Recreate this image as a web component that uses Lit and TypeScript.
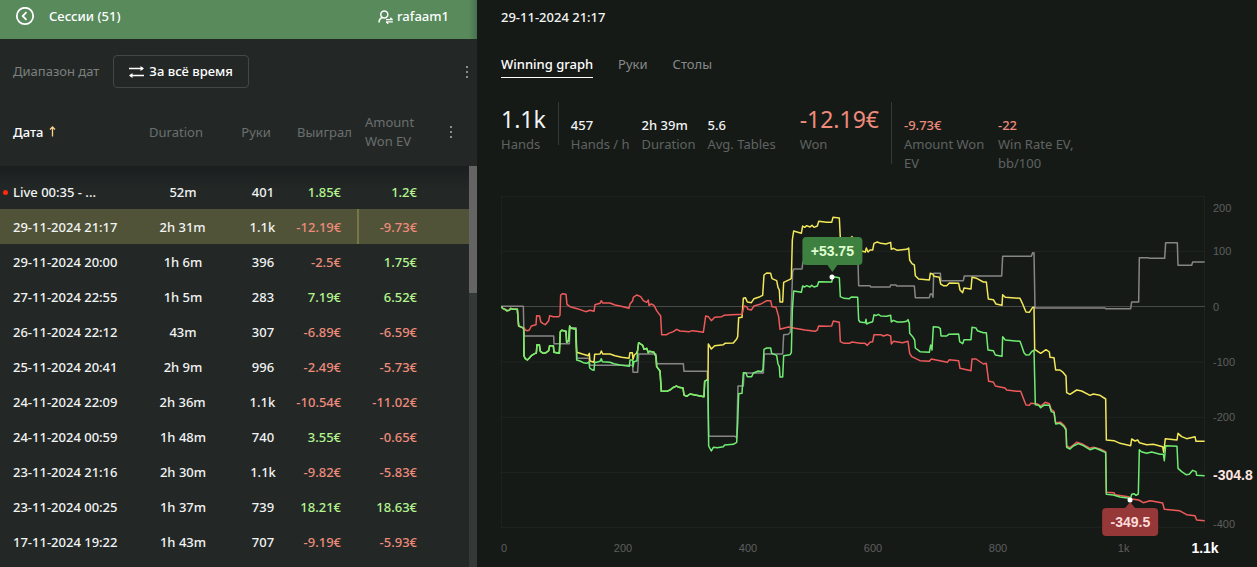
import { LitElement, html, svg, css } from "lit";
import { customElement, property, state } from "lit/decorators.js";
import { classMap } from "lit/directives/class-map.js";

interface Session {
  date: string;
  duration: string;
  hands: string;
  won: string;
  ev: string;
  live?: boolean;
}

const SESSIONS: Session[] = [
  { date: "Live 00:35 - ...", duration: "52m", hands: "401", won: "1.85€", ev: "1.2€", live: true },
  { date: "29-11-2024 21:17", duration: "2h 31m", hands: "1.1k", won: "-12.19€", ev: "-9.73€" },
  { date: "29-11-2024 20:00", duration: "1h 6m", hands: "396", won: "-2.5€", ev: "1.75€" },
  { date: "27-11-2024 22:55", duration: "1h 5m", hands: "283", won: "7.19€", ev: "6.52€" },
  { date: "26-11-2024 22:12", duration: "43m", hands: "307", won: "-6.89€", ev: "-6.59€" },
  { date: "25-11-2024 20:41", duration: "2h 9m", hands: "996", won: "-2.49€", ev: "-5.73€" },
  { date: "24-11-2024 22:09", duration: "2h 36m", hands: "1.1k", won: "-10.54€", ev: "-11.02€" },
  { date: "24-11-2024 00:59", duration: "1h 48m", hands: "740", won: "3.55€", ev: "-0.65€" },
  { date: "23-11-2024 21:16", duration: "2h 30m", hands: "1.1k", won: "-9.82€", ev: "-5.83€" },
  { date: "23-11-2024 00:25", duration: "1h 37m", hands: "739", won: "18.21€", ev: "18.63€" },
  { date: "17-11-2024 19:22", duration: "1h 43m", hands: "707", won: "-9.19€", ev: "-5.93€" },
];

/** Plot space: x 33..2145, y 18..1014. Each segment is shifted by its own origin. */
const PLOT = { x: 33, y: 18, w: 2112, h: 996 };

const line = (...segments: [number, number, string][]) =>
  segments
    .flatMap(([dx, dy, pts]) =>
      pts.split(" ").map((p) => {
        const [x, y] = p.split(",").map(Number);
        return `${x + dx},${y + dy}`;
      })
    )
    .join(" ");

const START = "34,349 38,355 45,358 50,362 58,361 62,355 68,358 82,358 86,408 96,412 101,415";
const EARLY =
  "102,498 106,506 112,510 118,504 124,497 134,491 139,489 141,464 148,464 151,484 160,490 168,488 176,482 179,467 190,467 192,487 208,490 211,425 215,421 228,424 230,457 236,452 239,408 243,415 257,417";
const MID =
  "443,480 446,458 452,462 458,466 462,478 470,475 475,488 478,484 492,487 498,500 500,530 510,543 514,604 530,604 540,600 550,592 560,588 566,592 579,594 582,615 590,619 600,612 642,620 644,574 650,570 654,572";

const GREEN = line(
  [0, 0, START],
  [0, 0, EARLY],
  [0, 0, "260,510 270,513 280,518 290,520 297,516 299,534 306,539 312,541 314,517 320,517 330,514 334,506 337,515 360,517 372,521 390,525 418,529 420,510 428,510 429,530 432,515 441,512"],
  [0, 0, MID],
  [570, 0, "86,768 94,783 100,772 112,773 130,770 134,765 160,763 170,757 173,700 176,611 186,610 190,548 198,549 202,560 215,560 220,549 235,543 245,545 249,538 252,478 260,474 272,474 275,490 290,496 294,522 298,530 300,561 308,561 311,497 330,494 334,488 337,360 341,303 364,307 368,288 374,291 380,287 390,291 395,286 402,291 412,288 416,275 455,276 459,260 478,263 481,320 492,325 508,326 514,321 533,322 536,390 540,396"],
  [1110, 0, "16,398 18,388 20,402 28,398 38,395 42,374 48,377 55,373 62,378 80,379 92,376 94,396 100,391 112,396 128,396 140,394 144,389 148,400 149,430 158,440 164,450 166,474 180,485 208,487 212,465 216,480 220,410 236,412 241,416 243,438 260,438 266,433 296,432 299,455 308,461 312,449 333,449 336,412 348,414 352,422 370,428 379,428 384,480 400,482 406,495 426,499 428,440 436,450 480,454 486,470 492,488 498,495 508,494 516,484 522,480 526,644 536,646 542,653 550,647"],
  [1650, 510, "12,135 28,136 34,155 42,158 47,192 60,190 72,200 78,210 80,262 90,267 100,258 115,251 130,257 150,269 165,264 180,270 197,278 199,403 220,405 240,411 268,415 272,414 275,403 282,401 288,406 295,402 298,269 304,275 320,280 335,276 360,283 370,283 373,302 377,257 411,259 414,325 425,335 438,344 448,343 458,331 468,335 470,346 494,347"]
);

const RED = line(
  [0, 0, START],
  [0, 0, "102,413 106,420 112,422 118,420 124,408 138,404 140,377 149,378 152,395 158,400 166,404 176,392 179,377 190,380 206,380 210,376 212,315 218,311 228,313 231,343 240,350 262,356 287,365 300,361 312,364 315,344 330,340 334,332 338,339 360,339 375,345 390,348 417,355 420,342 428,332 430,322 440,315 452,320 460,332 470,337 475,330 477,346 484,342 492,346 500,362 508,373 512,378 515,434 530,434 536,430 550,425 560,418 570,423 598,425"],
  [570, 0, "36,422 50,424 70,427 74,400 77,378 85,380 94,392 104,382 125,380 132,376 155,374 186,373 192,348 200,350 204,358 214,360 222,348 240,343 250,338 260,332 272,332 276,350 288,352 296,380 300,418 325,411 345,415 375,420 405,424 412,420 416,408 440,409 455,408 460,393 478,397 481,455 492,460 508,460 516,456 540,460"],
  [1110, 0, "15,460 22,466 30,457 38,455 42,434 62,434 70,438 82,434 92,438 94,462 100,454 128,458 144,454 149,490 155,500 180,512 208,514 214,507 262,517 268,509 296,512 300,535 333,542 336,507 348,507 370,522 379,520 386,574 400,576 406,588 435,594 440,600 470,604 482,604 490,625 498,645 508,646 512,640 530,641 542,648"],
  [1650, 510, "16,127 28,131 34,149 42,154 47,188 62,187 72,196 78,206 80,258 90,263 110,247 125,251 150,265 160,262 180,267 197,275 199,397 222,398 225,404 265,410 275,417 296,420 310,428 330,422 340,424 368,429 373,448 418,452 440,464 465,467 470,480 494,482"]
);

const YELLOW = line(
  [0, 0, START],
  [0, 0, EARLY],
  [0, 0, "260,487 270,490 280,493 295,497 298,490 300,513 312,517 314,493 330,492 334,483 338,492 360,492 375,497 395,502 417,505 420,488 427,488 429,508 433,495 440,489"],
  [0, 0, MID],
  [570, 0, "85,462 94,477 104,467 130,464 135,460 160,459 170,447 173,440 176,383 186,382 190,325 196,323 202,336 214,338 222,326 240,320 248,316 252,255 260,249 272,250 276,266 290,272 294,292 298,300 300,336 308,336 311,277 330,268 334,265 337,150 341,123 364,130 368,108 374,112 380,107 390,111 396,106 402,112 412,108 416,94 440,97 455,97 459,82 478,84 481,145 508,147 516,140 520,145 533,150 536,178"],
  [1110, 0, "8,184 16,186 19,174 24,186 30,180 38,180 42,160 52,156 62,160 78,162 92,157 94,178 100,175 112,181 140,178 146,174 149,210 156,221 163,225 166,257 176,267 208,270 211,250 218,252 222,259 238,262 242,282 250,287 260,287 268,279 296,280 300,300 308,308 312,294 333,297 336,262 350,265 370,276 379,276 385,327 400,329 408,342 426,346 428,314 436,322 480,325 488,342 498,366 508,367 518,352 522,352 524,478 542,490 558,479 568,486 570,502 582,503"],
  [1650, 510, "47,30 60,30 70,38 78,48 80,98 90,103 110,90 125,93 150,106 160,102 180,106 197,117 199,240 222,242 240,250 272,257 275,237 285,243 293,240 298,248 320,254 340,253 368,260 371,277 376,236 411,240 414,220 425,230 440,236 465,230 468,244 494,244"]
);

const GRAY = line(
  [0, 0, "34,349 100,349 102,438 191,438 192,461 238,461 240,413 258,413 261,505 297,505 300,526 428,526 429,547 443,547 446,492 498,492 500,521 580,521 582,544"],
  [570, 0, "82,544 86,739 165,739 170,743 174,588 190,588 192,549 250,549 253,492 308,492 311,434 325,433 331,427 338,245 341,237 366,237 369,215 534,215 536,287"],
  [1110, 0, "30,287 32,291 90,291 92,285 108,285 110,288 163,288 166,323 208,323 211,312 216,312 219,322 221,250 241,250 243,272 310,272 313,258 425,258 428,199 514,199 518,188 522,188 525,354"],
  [1650, 0, "195,354 197,356 272,356 275,336 296,336 298,203 325,203 327,205 374,205 377,158 412,158 414,226 455,226 458,216 494,216"]
);

const GRID_ROWS = [19, 184, 516, 682, 847, 1012];
const Y_LABELS = [
  { text: "200", y: 54 },
  { text: "100", y: 184 },
  { text: "0", y: 351 },
  { text: "-100", y: 516 },
  { text: "-200", y: 682 },
  { text: "-304.8", y: 855, strong: true },
  { text: "-400", y: 1002 },
];
const X_LABELS = [
  { text: "0", x: 42 },
  { text: "200", x: 399 },
  { text: "400", x: 774 },
  { text: "600", x: 1149 },
  { text: "800", x: 1524 },
  { text: "1k", x: 1901 },
  { text: "1.1k", x: 2145, strong: true },
];
const MARKERS = [
  { text: "+53.75", x: 1027, y: 260, up: true },
  { text: "-349.5", x: 1921, y: 930, up: false },
];

const pctX = (x: number) => `${(((x - PLOT.x) / PLOT.w) * 100).toFixed(3)}%`;
const pctY = (y: number) => `${(((y - PLOT.y) / PLOT.h) * 100).toFixed(3)}%`;

const dots = svg`<svg class="dots" width="4" height="14" viewBox="0 0 4 14" aria-hidden="true">
  <path d="M1 1h2v2H1zM1 6h2v2H1zM1 11h2v2H1z" fill="currentColor"/></svg>`;

@customElement("winning-graph")
class WinningGraph extends LitElement {
  static styles = css`
    :host {
      display: grid;
      grid-template-columns: 1fr 52px;
      grid-template-rows: 332px 39px;
      font: 11px/16px "Liberation Sans", Arial, sans-serif;
      color: #5c5f5d;
    }
    .plot, .y-axis, .x-axis { position: relative; }
    .canvas { display: block; width: 100%; height: 100%; }
    .grid { stroke: #212522; }
    .zero { stroke: #474a48; }
    .series { fill: none; stroke-width: 1.5; stroke-linejoin: round; }
    .gray { stroke: #868686; }
    .yellow { stroke: #f2e85a; }
    .red { stroke: #ee5a5a; }
    .green { stroke: #6fed72; }
    .y-axis span {
      position: absolute;
      left: 8px;
      transform: translateY(-50%);
    }
    .y-axis .strong { font-size: 14px; font-weight: bold; color: #ffe4e0; }
    .x-axis span {
      position: absolute;
      top: 12px;
      transform: translateX(-50%);
    }
    .x-axis .strong { font-size: 14px; font-weight: bold; color: #fff; }
    .point {
      position: absolute;
      width: 5px;
      height: 5px;
      border-radius: 50%;
      background: #fff;
      transform: translate(-50%, -50%);
    }
    .tip {
      position: absolute;
      padding: 6px 8px;
      border-radius: 4px;
      font-size: 14px;
      font-weight: bold;
      background: #3d8040;
      color: #e0ffd0;
    }
    .tip::after {
      content: "";
      position: absolute;
      left: 50%;
      top: 100%;
      border: 5px solid transparent;
      border-top: 7px solid #3d8040;
      border-bottom: 0;
      transform: translateX(-50%);
    }
    .tip.above { transform: translate(-50%, -40px); }
    .tip.below { transform: translate(-50%, 8px); background: #963838; color: #ffdcd8; }
    .tip.below::after {
      top: auto;
      bottom: 100%;
      border-top: 0;
      border-bottom: 6px solid #963838;
    }
  `;

  render() {
    return html`
      <div class="plot">
        <svg class="canvas" viewBox="${PLOT.x} ${PLOT.y} ${PLOT.w} ${PLOT.h}" preserveAspectRatio="none" role="img" aria-label="Winning graph">
          ${GRID_ROWS.map((y) => svg`<line class="grid" x1="33" x2="2145" y1=${y} y2=${y} vector-effect="non-scaling-stroke"/>`)}
          ${[34, 2144].map((x) => svg`<line class="grid" x1=${x} x2=${x} y1="18" y2="1014" vector-effect="non-scaling-stroke"/>`)}
          <line class="zero" x1="33" x2="2145" y1="349.5" y2="349.5" vector-effect="non-scaling-stroke"/>
          <polyline class="series gray" points=${GRAY} vector-effect="non-scaling-stroke"/>
          <polyline class="series yellow" points=${YELLOW} vector-effect="non-scaling-stroke"/>
          <polyline class="series red" points=${RED} vector-effect="non-scaling-stroke"/>
          <polyline class="series green" points=${GREEN} vector-effect="non-scaling-stroke"/>
        </svg>
        ${MARKERS.map((m) => html`
          <span class=${classMap({ tip: true, above: m.up, below: !m.up })} style="left:${pctX(m.x)};top:${pctY(m.y)}">${m.text}</span>
          <i class="point" style="left:${pctX(m.x)};top:${pctY(m.y)}"></i>`)}
      </div>
      <div class="y-axis">
        ${Y_LABELS.map((l) => html`<span class=${classMap({ strong: !!l.strong })} style="top:${pctY(l.y)}">${l.text}</span>`)}
      </div>
      <div class="x-axis">
        ${X_LABELS.map((l) => html`<span class=${classMap({ strong: !!l.strong })} style="left:${pctX(l.x)}">${l.text}</span>`)}
      </div>
    `;
  }
}

@customElement("session-list")
class SessionList extends LitElement {
  @property({ type: Number }) selected = 1;

  static styles = css`
    :host { display: block; position: relative; flex: 1; min-height: 0; overflow: hidden; }
    table, thead, tbody { display: block; }
    table { height: 100%; }
    tr {
      display: grid;
      grid-template-columns: 137fr 92fr 68fr 60fr 68fr 44fr;
      margin-right: 8px;
    }
    th { padding: 0; font-weight: 400; text-align: left; color: #6b6f6e; line-height: 19px; }
    thead tr { height: 68px; align-items: center; }
    th.date { padding-left: 13px; color: #fff; font-weight: 500; }
    .arrow { margin-left: 5px; }
    .arrow path { stroke: #ffcf8a; stroke-width: 1.3; fill: none; }
    th.duration, th.hands { text-align: center; padding-right: 14px; }
    th.ev { padding-left: 8px; }
    th.menu { text-align: center; padding-left: 8px; }
    tbody {
      padding-top: 8px;
      min-height: 100%;
      background: linear-gradient(#1b1e1e, #232827 24px);
    }
    tbody tr { height: 35px; cursor: pointer; }
    td { padding: 2px 0 0; line-height: 33px; font-weight: 500; color: #f2f4f3; white-space: nowrap; }
    td.date { position: relative; padding-left: 13px; }
    td.live::before {
      content: "";
      position: absolute;
      left: 3px;
      top: 16px;
      width: 5px;
      height: 5px;
      border-radius: 50%;
      background: #ff2a10;
    }
    td.duration, td.hands { text-align: center; }
    td.won { text-align: right; padding-right: 16px; }
    td.ev { text-align: right; padding-right: 8px; }
    .plus { color: #b5f58e; }
    .minus { color: #ee8b7a; }
    .selected { background: #505338; }
    .selected .ev { border-left: 2px solid #747846; }
    button { border: 0; padding: 4px; background: none; color: #8a8f8d; }
    .dots { display: block; }
    .scrollbar { position: absolute; top: 68px; right: 0; bottom: 0; width: 8px; background: #343837; }
    .thumb { height: 127px; background: #646464; }
  `;

  private amount(cls: string, v: string) {
    const minus = v.startsWith("-");
    return html`<td class=${classMap({ [cls]: true, minus, plus: !minus })}>${v}</td>`;
  }

  render() {
    return html`
      <table>
        <thead>
          <tr>
            <th class="date">Дата<svg class="arrow" width="7" height="11" viewBox="0 0 7 11" aria-hidden="true"><path d="M3.5 10.500V1M1 3.5 3.5 1 6 3.5"/></svg></th>
            <th class="duration">Duration</th>
            <th class="hands">Руки</th>
            <th class="won">Выиграл</th>
            <th class="ev">Amount<br />Won EV</th>
            <th class="menu"><button aria-label="Столбцы">${dots}</button></th>
          </tr>
        </thead>
        <tbody>
          ${SESSIONS.map((s, i) => html`
            <tr class=${classMap({ selected: i === this.selected })} @click=${() => (this.selected = i)}>
              <td class=${classMap({ date: true, live: !!s.live })}>${s.date}</td>
              <td class="duration">${s.duration}</td>
              <td class="hands">${s.hands}</td>
              ${this.amount("won", s.won)}
              ${this.amount("ev", s.ev)}
              <td></td>
            </tr>`)}
        </tbody>
      </table>
      <div class="scrollbar"><div class="thumb"></div></div>
    `;
  }
}

@customElement("app-root")
class AppRoot extends LitElement {
  @state() private tab = 0;

  static styles = css`
    :host {
      display: grid;
      grid-template-columns: 477px 1fr;
      height: 100vh;
      overflow: hidden;
      font: 13px/19px "Noto Sans", "Open Sans", sans-serif;
      background: #161a17;
      color: #f2f4f3;
    }
    button { font: inherit; color: inherit; background: none; border: 0; padding: 0; cursor: pointer; }
    .side { display: flex; flex-direction: column; min-height: 0; background: #232827; }
    .top {
      display: flex;
      align-items: center;
      height: 33px;
      padding: 0 28px 6px 15px;
      background: linear-gradient(to left, #477050, #588a5c 8px);
      font-weight: 500;
      color: #fff;
    }
    .top svg, .range svg { display: block; fill: none; stroke: currentColor; }
    .back { margin-right: 14px; }
    .user { display: flex; align-items: center; gap: 4px; margin-left: auto; }
    .toolbar { display: flex; align-items: center; padding: 16px 4px 10px 13px; color: #7c807e; }
    .range {
      display: flex;
      align-items: center;
      gap: 5px;
      height: 33px;
      margin-left: 14px;
      padding: 0 15px;
      border: 1px solid #434846;
      border-radius: 4px;
      color: #fff;
      font-weight: 500;
    }
    .more { margin-left: auto; padding: 4px; color: #8a8f8d; }
    .dots { display: block; }
    .main { display: flex; flex-direction: column; padding-left: 24px; min-width: 0; }
    .title { margin: 8px 0 0; font: inherit; font-weight: 500; }
    .tabs { display: flex; gap: 25px; margin-top: 28px; }
    .tab { height: 23px; padding-bottom: 4px; color: #868987; border-bottom: 1px solid transparent; }
    .active { color: #fff; font-weight: 500; border-color: #fff; }
    .stats { display: flex; align-items: flex-start; gap: 24px; margin-top: 24px; }
    .group { display: flex; align-items: flex-start; gap: 12px; }
    .stat { display: flex; flex-direction: column; }
    .value { height: 33px; line-height: 47px; font-weight: 500; }
    .big .value { font-size: 23px; line-height: 35px; font-weight: 400; }
    .label { color: #5f6361; max-width: 82px; }
    .rule { align-self: stretch; width: 1px; margin-bottom: 9px; background: #343836; }
    .loss { color: #ee8b7a; }
    .graph { margin-top: 23px; }
  `;

  private stat(value: string, label: string, cls = {}) {
    return html`<div class=${classMap({ stat: true, ...cls })}><span class="value">${value}</span><span class="label">${label}</span></div>`;
  }

  private loss(value: string, label: string, big = false) {
    return html`<div class=${classMap({ stat: true, big })}><span class="value loss">${value}</span><span class="label">${label}</span></div>`;
  }

  render() {
    return html`
      <aside class="side">
        <header class="top">
          <button class="back" aria-label="Назад">
            <svg width="20" height="20" viewBox="0 0 20 20" stroke-width="1.8"><circle cx="10" cy="9" r="8.2"/><path d="M11.500 5.200 7.700 9l3.800 3.800"/></svg>
          </button>
          <span>Сессии (51)</span>
          <button class="user">
            <svg width="15" height="14" viewBox="0 0 15 14" stroke-width="1.5"><circle cx="6.300" cy="4.400" r="3.500"/><path d="M1 12.500C1.100 9.800 2.400 8.100 4.400 7.500"/><path d="M8 9.700h6.800M12.400 7.800l2 1.900M14.800 11.900H8M10.200 13.800l-2-1.900" stroke-width="1.300"/></svg>
            rafaam1
          </button>
        </header>
        <div class="toolbar">
          <span>Диапазон дат</span>
          <button class="range">
            <svg width="15" height="12" viewBox="0 0 15 12" stroke-width="1.3"><path d="M0 2.500h14M1 9.500h14"/><path d="M11.500 0 15 2.500 11.500 5zM3.500 7 0 9.500 3.500 12z" fill="currentColor" stroke="none"/></svg>
            За всё время
          </button>
          <button class="more" aria-label="Меню">${dots}</button>
        </div>
        <session-list></session-list>
      </aside>
      <main class="main">
        <h1 class="title">29-11-2024 21:17</h1>
        <nav class="tabs">
          ${["Winning graph", "Руки", "Столы"].map((t, i) => html`
            <button class=${classMap({ tab: true, active: i === this.tab })} @click=${() => (this.tab = i)}>${t}</button>`)}
        </nav>
        <section class="stats">
          <div class="group">
            ${this.stat("1.1k", "Hands", { big: true })}
            <div class="rule"></div>
            ${this.stat("457", "Hands / h")}
            ${this.stat("2h 39m", "Duration")}
            ${this.stat("5.6", "Avg. Tables")}
          </div>
          <div class="group">
            ${this.loss("-12.19€", "Won", true)}
            <div class="rule"></div>
            ${this.loss("-9.73€", "Amount Won EV")}
            ${this.loss("-22", "Win Rate EV, bb/100")}
          </div>
        </section>
        <winning-graph class="graph"></winning-graph>
      </main>
    `;
  }
}
